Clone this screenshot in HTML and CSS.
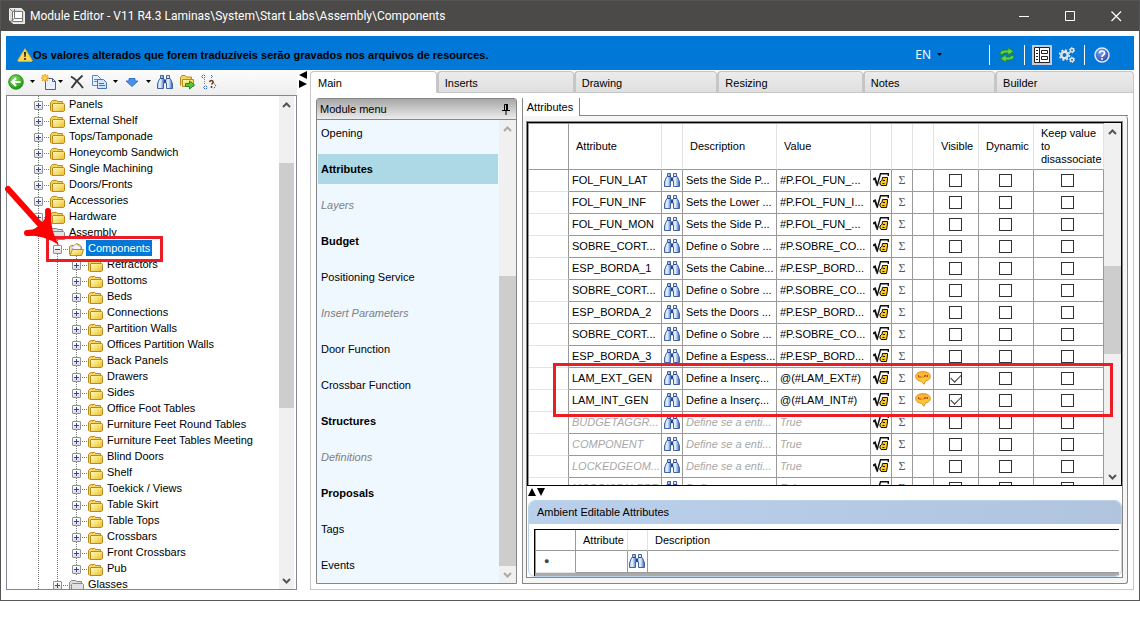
FILE: index.html
```html
<!DOCTYPE html>
<html lang="en">
<head>
<meta charset="utf-8">
<title>Module Editor</title>
<link rel="stylesheet" href="styles.css">
</head>
<body>
<svg class="defs" aria-hidden="true">
  <defs>
    <linearGradient id="gFolder" x1="0" y1="0" x2="1" y2="1"><stop offset="0" stop-color="#fffbd0"/><stop offset=".5" stop-color="#f8e06e"/><stop offset="1" stop-color="#e6b83a"/></linearGradient>
    <linearGradient id="gBino" x1="0" y1="0" x2="1" y2="0"><stop offset="0" stop-color="#8fb4e0"/><stop offset=".35" stop-color="#f2f8ff"/><stop offset=".65" stop-color="#9dbde6"/><stop offset="1" stop-color="#2f55a8"/></linearGradient>
    <radialGradient id="gGreen" cx=".4" cy=".3" r=".7"><stop offset="0" stop-color="#86e060"/><stop offset="1" stop-color="#1c9414"/></radialGradient>
    <radialGradient id="gHelp" cx=".4" cy=".3" r=".8"><stop offset="0" stop-color="#7fa4f0"/><stop offset="1" stop-color="#1b3fae"/></radialGradient>
    <linearGradient id="gTalk" x1="0" y1="0" x2="0" y2="1"><stop offset="0" stop-color="#ffb02a"/><stop offset="1" stop-color="#ffd83c"/></linearGradient>
    <symbol id="folder" viewBox="0 0 15 13"><path d="M.5 11.500V3.500L2.500 1.500H6.500L8 2.500H12.500V4.500" fill="#f3d565" stroke="#b98b1c"/><path d="M2.500 12.500V5Q2.500 4.500 3 4.500H13.500Q14.500 4.500 14.500 5.500V11.500L13.500 12.500Z" fill="url(#gFolder)" stroke="#b98b1c"/><path d="M.5 11.500L2.500 12.500" stroke="#b98b1c"/></symbol>
    <symbol id="folder-gray" viewBox="0 0 15 13"><path d="M.5 11.500V3.500L2.500 1.500H6.500L8 2.500H12.500V4.500" fill="#ddd" stroke="#888"/><path d="M2.500 12.500V5.500L3.500 4.500H13.500L14.500 5.500V12.500Z" fill="#e2e2e2" stroke="#888"/></symbol>
    <symbol id="folder-open" viewBox="0 0 15 13"><path d="M.5 11.500V3.500L2.500 2.500H5L8 .5L12.500 3.500V6" fill="#f1dc8a" stroke="#b98b1c"/><path d="M3 4L7 1L12 4.500L11 7H4Z" fill="#f4f4ff" stroke="#9a9ac8" stroke-dasharray="1 1"/><path d="M1 12.500L3.500 6.500H14.500L12.500 12.500Z" fill="url(#gFolder)" stroke="#b98b1c"/></symbol>
    <symbol id="bino" viewBox="0 0 16 14"><path d="M3.500 .5H6.500V3.500L7.500 5V8H6.500V13.500H.5V9L2 5L3.500 3Z" fill="url(#gBino)" stroke="#4263a6"/><path d="M9.500 .5H12.500V3L14 5L15.500 9V13.500H9.500V8H8.500V5L9.500 3.500Z" fill="url(#gBino)" stroke="#4263a6"/><path d="M3.500 3.500H6.500M9.500 3.500H12.500" stroke="#24448e"/><path d="M7 5H9V8H7Z" fill="#24448e"/></symbol>
    <symbol id="root" viewBox="0 0 16 14"><path d="M0 6.500L2 5.500L4 11.500" fill="none" stroke="#111" stroke-width="2"/><path d="M4 13L7.500 .8H15.300V3" fill="none" stroke="#111" stroke-width="1.400"/><path d="M9.500 4.500H14.500V7L13.500 12.500H8L7 11V9L8.500 7.500H9Z" fill="#ffc91c" stroke="#111"/><path d="M10 7.500H12M9.500 10.500H11.500" stroke="#111"/></symbol>
    <symbol id="talk" viewBox="0 0 16 14"><path d="M8 .7C12.500 .7 15.300 2.500 15.300 5.500C15.300 8 13 9.600 10.500 10L9 13.300L6.500 10.200C3 10 .7 8.300 .7 5.500C.7 2.500 3.500 .7 8 .7Z" fill="url(#gTalk)" stroke="#d98e2b"/><path d="M3.500 4V6H6.500M7.500 6H8.500M9.500 6V4.500H11V6M12.500 4V6" fill="none" stroke="#b5491c"/></symbol>
    <symbol id="up" viewBox="0 0 9 6"><path d="M1 5L4.500 1.500L8 5" fill="none" stroke="currentColor" stroke-width="2"/></symbol>
    <symbol id="down" viewBox="0 0 9 6"><path d="M1 1L4.500 4.500L8 1" fill="none" stroke="currentColor" stroke-width="2"/></symbol>
    <symbol id="caret" viewBox="0 0 5 3"><path d="M0 0H5L2.500 3Z" fill="#000"/></symbol>
  </defs>
</svg>

<div class="window">
  <header class="titlebar">
    <svg class="app-icon" viewBox="0 0 16 16"><path d="M.5 .5H12.500L15.500 4V15.500H4L.5 12Z" fill="#ddd" stroke="#eee"/><path d="M3.500 3.500H13.500V13.500H3.500Z" fill="#fff" stroke="#777"/><path d="M.5 .5L3.500 3.500M5.500 1V10.500L1 14M5.500 10.500H13" fill="none" stroke="#777"/></svg>
    <h1 class="title">Module Editor - V11 R4.3 Laminas\System\Start Labs\Assembly\Components</h1>
    <button class="win-btn" aria-label="Minimize"><svg viewBox="0 0 11 11"><path d="M0 5.500H10" stroke="#fff"/></svg></button>
    <button class="win-btn" aria-label="Maximize"><svg viewBox="0 0 11 11"><path d="M.5 .5H9.500V9.500H.5Z" fill="none" stroke="#fff"/></svg></button>
    <button class="win-btn" aria-label="Close"><svg viewBox="0 0 11 11"><path d="M.5 .5L10 10M10 .5L.5 10" stroke="#fff" stroke-width="1.200"/></svg></button>
  </header>

  <div class="client">
    <div class="banner">
      <svg class="warn" viewBox="0 0 16 14"><path d="M8 .7L15.300 12.500Q15 13.400 14 13.400H2Q1 13.400 .7 12.500Z" fill="#fbd84c" stroke="#d9b23c"/><path d="M7 4H9L8.600 9H7.400Z" fill="#222"/><circle cx="8" cy="11" r="1.100" fill="#222"/></svg>
      <strong class="banner-text">Os valores alterados que forem traduzíveis serão gravados nos arquivos de resources.</strong>
      <button class="lang">EN <svg class="caret"><use href="#caret"/></svg></button>
      <div class="tools">
        <button class="tool" aria-label="Refresh"><svg viewBox="0 0 16 16"><path d="M1 7Q1 3 6 3H9V.5L14.500 4.500L9 8.500V6H6Q3.500 6 3.500 8Z" fill="#5fd24a" stroke="#1d8a2a"/><path d="M15 9Q15 13 10 13H7V15.500L1.500 11.500L7 7.500V10H10Q12.500 10 12.500 8Z" fill="#5fd24a" stroke="#1d8a2a"/></svg></button>
      </div>
      <div class="tools">
        <button class="tool pressed" aria-label="Show properties"><svg viewBox="0 0 16 16"><path d="M.5 .5H15.500V15.500H.5Z" fill="#fff" stroke="#222"/><path d="M5.500 1V15M2 3.500H4M2 6.500H4M2 9.500H4M2 12.500H4" stroke="#222"/><path d="M7.500 3.500H13.500V6.500H7.500ZM7.500 9.500H13.500V12.500H7.500Z" fill="none" stroke="#222"/></svg></button>
        <button class="tool" aria-label="Settings"><svg viewBox="0 0 16 16"><circle cx="5.500" cy="8" r="3.200" fill="none" stroke="#e8e6e2" stroke-width="2.400"/><circle cx="5.500" cy="8" r="5" fill="none" stroke="#e8e6e2" stroke-width="1.600" stroke-dasharray="2 1.930"/><circle cx="13" cy="3.200" r="1.700" fill="none" stroke="#e8e6e2" stroke-width="1.500"/><circle cx="13" cy="3.200" r="2.700" fill="none" stroke="#e8e6e2" stroke-dasharray="1.400 1.430"/><circle cx="13" cy="12.800" r="1.700" fill="none" stroke="#e8e6e2" stroke-width="1.500"/><circle cx="13" cy="12.800" r="2.700" fill="none" stroke="#e8e6e2" stroke-dasharray="1.400 1.430"/></svg></button>
      </div>
      <div class="tools">
        <button class="tool" aria-label="Help"><svg viewBox="0 0 16 16"><circle cx="8" cy="8" r="7" fill="url(#gHelp)" stroke="#dfe8fa" stroke-width="1.500"/><path d="M5.500 6.300Q5.500 4 8 4T10.500 6.200Q10.500 7.300 9.300 8T8 10" fill="none" stroke="#fff" stroke-width="1.700"/><circle cx="8" cy="12" r="1" fill="#fff"/></svg></button>
      </div>
    </div>

    <div class="body">
      <aside class="side">
        <div class="toolbar">
          <div class="split">
            <button class="tb" aria-label="Back"><svg viewBox="0 0 16 16"><circle cx="8" cy="8" r="7.300" fill="url(#gGreen)" stroke="#2a9a20"/><path d="M12.500 8H4.500M8 4L4 8L8 12" fill="none" stroke="#fff" stroke-width="2.200"/></svg></button>
            <button class="drop" aria-label="Back options"><svg class="caret"><use href="#caret"/></svg></button>
          </div>
          <div class="split tight">
            <button class="tb" aria-label="New"><svg viewBox="0 0 16 16"><path d="M4.500 4.500H11.500L14.500 7.500V15.500H4.500Z" fill="#e8f0fb" stroke="#49618f"/><path d="M11.500 4.500V7.500H14.500" fill="none" stroke="#49618f"/><path d="M4 0V8M0 4H8M1 1L7 7M7 1L1 7" stroke="#f5a11c" stroke-width="1.500"/><circle cx="4" cy="4" r="1.800" fill="#ffe14a"/></svg></button>
            <button class="drop" aria-label="New options"><svg class="caret"><use href="#caret"/></svg></button>
          </div>
          <button class="tb" aria-label="Delete"><svg viewBox="0 0 16 16"><path d="M2 2.500Q8 6 14 14M13.500 1.500Q7 7 2.500 14" fill="none" stroke="#3a3a3a" stroke-width="1.900"/></svg></button>
          <div class="split">
            <button class="tb" aria-label="Copy"><svg viewBox="0 0 16 16"><path d="M1.500 1.500H6.500L9.500 4.500V11.500H1.500Z" fill="#e6f0ff" stroke="#5b86cc"/><path d="M3 5.500H7M3 7.500H7" stroke="#5b86cc"/><path d="M6.500 5.500H12.500L15.500 8.500V14.500H6.500Z" fill="#d2e4fc" stroke="#4672bd"/><path d="M8 9.500H13M8 11.500H14" stroke="#4672bd"/></svg></button>
            <button class="drop" aria-label="Copy options"><svg class="caret"><use href="#caret"/></svg></button>
          </div>
          <div class="split">
            <button class="tb" aria-label="Move down"><svg viewBox="0 0 16 16"><path d="M5 4.500H11V7H14L8 12.500L2 7H5Z" fill="#4d8fea" stroke="#3776d2"/></svg></button>
            <button class="drop" aria-label="Move options"><svg class="caret"><use href="#caret"/></svg></button>
          </div>
          <button class="tb" aria-label="Find"><svg viewBox="0 0 16 14"><use href="#bino"/></svg></button>
          <button class="tb" aria-label="Export to folder"><svg viewBox="0 0 16 16"><path d="M1.500 11.500V3.500L3 1.500H6L7.500 3H12.500V5" fill="#f3d565" stroke="#b98b1c"/><path d="M3.500 12.500V5.500H14.500V12.500Z" fill="url(#gFolder)" stroke="#b98b1c"/><path d="M6.500 9.500H10.500V7L15.500 11L10.500 15V12.500H6.500Z" fill="#5cc43c" stroke="#2a8a1c"/></svg></button>
          <button class="tb" aria-label="Check structure"><svg viewBox="0 0 16 16"><path d="M.5 2.500L2.500 .5L4.500 2.500L2.500 4.500ZM11.500 2.500L9.500 .5M11.500 2.500L9.500 4.500M2.500 13.500L4.500 11.500L6.500 13.500L4.500 15.500ZM12 8L15 12L12 15" fill="none" stroke="#2f62c4" stroke-dasharray="2 1"/><path d="M3.500 5V11" stroke="#38a0a0" stroke-dasharray="1 1"/><path d="M8.500 8Q9 6.500 10.500 6.500T12 8.500Q11.500 9.500 10.500 10.500M10.500 12V14" fill="none" stroke="#6b3a12" stroke-width="1.500"/></svg></button>
        </div>
        <nav class="tree" aria-label="Groups">
          <div class="tree-view">
            <ul class="branch">
              <li><div class="node"><i class="toggle plus"></i><svg class="fold"><use href="#folder"/></svg><span class="label">Panels</span></div></li>
              <li><div class="node"><i class="toggle plus"></i><svg class="fold"><use href="#folder"/></svg><span class="label">External Shelf</span></div></li>
              <li><div class="node"><i class="toggle plus"></i><svg class="fold"><use href="#folder"/></svg><span class="label">Tops/Tamponade</span></div></li>
              <li><div class="node"><i class="toggle plus"></i><svg class="fold"><use href="#folder"/></svg><span class="label">Honeycomb Sandwich</span></div></li>
              <li><div class="node"><i class="toggle plus"></i><svg class="fold"><use href="#folder"/></svg><span class="label">Single Machining</span></div></li>
              <li><div class="node"><i class="toggle plus"></i><svg class="fold"><use href="#folder"/></svg><span class="label">Doors/Fronts</span></div></li>
              <li><div class="node"><i class="toggle plus"></i><svg class="fold"><use href="#folder"/></svg><span class="label">Accessories</span></div></li>
              <li><div class="node"><i class="toggle plus"></i><svg class="fold"><use href="#folder"/></svg><span class="label">Hardware</span></div></li>
              <li><div class="node plain"><i class="toggle"></i><svg class="fold"><use href="#folder-gray"/></svg><span class="label">Assembly</span></div>
                <ul class="branch">
                  <li><div class="node current"><i class="toggle"></i><svg class="fold"><use href="#folder-open"/></svg><span class="label selected">Components</span>
                      <span class="mark mark-node"></span>
                      <svg class="pointer" viewBox="0 0 60 64"><path d="M6 6L42 46" stroke="#f00" stroke-width="6" stroke-linecap="round"/><path d="M25 50Q38 50 43 44Q47 38 46 28" fill="none" stroke="#f00" stroke-width="6" stroke-linecap="round"/><path d="M23 52Q42 52 57 62Q48 48 49 28L38 42Z" fill="#f00"/></svg></div>
                    <ul class="branch">
                      <li><div class="node"><i class="toggle plus"></i><svg class="fold"><use href="#folder"/></svg><span class="label">Retractors</span></div></li>
                      <li><div class="node"><i class="toggle plus"></i><svg class="fold"><use href="#folder"/></svg><span class="label">Bottoms</span></div></li>
                      <li><div class="node"><i class="toggle plus"></i><svg class="fold"><use href="#folder"/></svg><span class="label">Beds</span></div></li>
                      <li><div class="node"><i class="toggle plus"></i><svg class="fold"><use href="#folder"/></svg><span class="label">Connections</span></div></li>
                      <li><div class="node"><i class="toggle plus"></i><svg class="fold"><use href="#folder"/></svg><span class="label">Partition Walls</span></div></li>
                      <li><div class="node"><i class="toggle plus"></i><svg class="fold"><use href="#folder"/></svg><span class="label">Offices Partition Walls</span></div></li>
                      <li><div class="node"><i class="toggle plus"></i><svg class="fold"><use href="#folder"/></svg><span class="label">Back Panels</span></div></li>
                      <li><div class="node"><i class="toggle plus"></i><svg class="fold"><use href="#folder"/></svg><span class="label">Drawers</span></div></li>
                      <li><div class="node"><i class="toggle plus"></i><svg class="fold"><use href="#folder"/></svg><span class="label">Sides</span></div></li>
                      <li><div class="node"><i class="toggle plus"></i><svg class="fold"><use href="#folder"/></svg><span class="label">Office Foot Tables</span></div></li>
                      <li><div class="node"><i class="toggle plus"></i><svg class="fold"><use href="#folder"/></svg><span class="label">Furniture Feet Round Tables</span></div></li>
                      <li><div class="node"><i class="toggle plus"></i><svg class="fold"><use href="#folder"/></svg><span class="label">Furniture Feet Tables Meeting</span></div></li>
                      <li><div class="node"><i class="toggle plus"></i><svg class="fold"><use href="#folder"/></svg><span class="label">Blind Doors</span></div></li>
                      <li><div class="node"><i class="toggle plus"></i><svg class="fold"><use href="#folder"/></svg><span class="label">Shelf</span></div></li>
                      <li><div class="node"><i class="toggle plus"></i><svg class="fold"><use href="#folder"/></svg><span class="label">Toekick / Views</span></div></li>
                      <li><div class="node"><i class="toggle plus"></i><svg class="fold"><use href="#folder"/></svg><span class="label">Table Skirt</span></div></li>
                      <li><div class="node"><i class="toggle plus"></i><svg class="fold"><use href="#folder"/></svg><span class="label">Table Tops</span></div></li>
                      <li><div class="node"><i class="toggle plus"></i><svg class="fold"><use href="#folder"/></svg><span class="label">Crossbars</span></div></li>
                      <li><div class="node"><i class="toggle plus"></i><svg class="fold"><use href="#folder"/></svg><span class="label">Front Crossbars</span></div></li>
                      <li><div class="node"><i class="toggle plus"></i><svg class="fold"><use href="#folder"/></svg><span class="label">Pub</span></div></li>
                    </ul>
                  </li>
                  <li><div class="node"><i class="toggle plus"></i><svg class="fold"><use href="#folder-gray"/></svg><span class="label">Glasses</span></div></li>
                </ul>
              </li>
            </ul>
          </div>
          <div class="scroll tree-scroll">
            <button class="sb" aria-label="Scroll up"><svg><use href="#up"/></svg></button>
            <div class="track"><div class="space tree-before"></div><div class="thumb tree-thumb"></div><div class="space tree-after"></div></div>
            <button class="sb" aria-label="Scroll down"><svg><use href="#down"/></svg></button>
          </div>
        </nav>
      </aside>

      <div class="gutter">
        <svg viewBox="0 0 8 18"><path d="M8 0V8L0 4ZM0 9V17L8 13Z"/></svg>
      </div>

      <main class="main">
        <div class="tabs">
          <button class="tab active tab-main">Main</button>
          <button class="tab tab-inserts">Inserts</button>
          <button class="tab tab-drawing">Drawing</button>
          <button class="tab tab-resizing">Resizing</button>
          <button class="tab tab-notes">Notes</button>
          <button class="tab tab-builder">Builder</button>
        </div>
        <div class="page">
          <section class="menu">
            <div class="menu-head"><h2 class="menu-title">Module menu</h2>
              <button class="pin" aria-label="Pin"><svg viewBox="0 0 8 11"><path d="M2.500 6V.5H5.500V6M0 6.500H8M4 7V11" fill="none" stroke="#000"/><path d="M5 0V6" stroke="#000" stroke-width="2"/></svg></button></div>
            <div class="menu-body">
              <nav class="menu-list" aria-label="Module menu">
                <a class="item" href="#">Opening</a>
                <a class="item on" href="#">Attributes</a>
                <a class="item off" href="#">Layers</a>
                <a class="item strong" href="#">Budget</a>
                <a class="item" href="#">Positioning Service</a>
                <a class="item off" href="#">Insert Parameters</a>
                <a class="item" href="#">Door Function</a>
                <a class="item" href="#">Crossbar Function</a>
                <a class="item strong" href="#">Structures</a>
                <a class="item off" href="#">Definitions</a>
                <a class="item strong" href="#">Proposals</a>
                <a class="item" href="#">Tags</a>
                <a class="item" href="#">Events</a>
              </nav>
              <div class="scroll dim">
                <button class="sb" aria-label="Scroll up"><svg><use href="#up"/></svg></button>
                <div class="track"><div class="space menu-before"></div><div class="thumb menu-thumb"></div></div>
                <button class="sb" aria-label="Scroll down"><svg><use href="#down"/></svg></button>
              </div>
            </div>
          </section>

          <section class="attrs">
            <div class="subtabs"><button class="subtab">Attributes</button><div class="subline"></div></div>
            <div class="frame">
              <div class="frame-in">
                <div class="grid">
                  <div class="grid-view">
                    <table class="data">
                      <colgroup><col class="c40"><col class="c93"><col class="c21"><col class="c94"><col class="c94"><col class="c21"><col class="c21"><col class="c21"><col class="c45"><col class="c55"><col class="c70"></colgroup>
                      <thead><tr><th></th><th>Attribute</th><th></th><th>Description</th><th>Value</th><th></th><th></th><th></th><th>Visible</th><th>Dynamic</th><th>Keep value to disassociate</th></tr></thead>
                      <tbody>
                        <tr><th></th><td>FOL_FUN_LAT</td><td class="ico"><svg><use href="#bino"/></svg></td><td>Sets the Side P...</td><td>#P.FOL_FUN_...</td><td class="ico"><svg><use href="#root"/></svg></td><td class="sum">Σ</td><td></td><td class="chk"><input type="checkbox" aria-label="Visible"></td><td class="chk"><input type="checkbox" aria-label="Dynamic"></td><td class="chk"><input type="checkbox" aria-label="Keep value"></td></tr>
                        <tr><th></th><td>FOL_FUN_INF</td><td class="ico"><svg><use href="#bino"/></svg></td><td>Sets the Lower ...</td><td>#P.FOL_FUN_I...</td><td class="ico"><svg><use href="#root"/></svg></td><td class="sum">Σ</td><td></td><td class="chk"><input type="checkbox" aria-label="Visible"></td><td class="chk"><input type="checkbox" aria-label="Dynamic"></td><td class="chk"><input type="checkbox" aria-label="Keep value"></td></tr>
                        <tr><th></th><td>FOL_FUN_MON</td><td class="ico"><svg><use href="#bino"/></svg></td><td>Sets the Side P...</td><td>#P.FOL_FUN_...</td><td class="ico"><svg><use href="#root"/></svg></td><td class="sum">Σ</td><td></td><td class="chk"><input type="checkbox" aria-label="Visible"></td><td class="chk"><input type="checkbox" aria-label="Dynamic"></td><td class="chk"><input type="checkbox" aria-label="Keep value"></td></tr>
                        <tr><th></th><td>SOBRE_CORT...</td><td class="ico"><svg><use href="#bino"/></svg></td><td>Define o Sobre ...</td><td>#P.SOBRE_CO...</td><td class="ico"><svg><use href="#root"/></svg></td><td class="sum">Σ</td><td></td><td class="chk"><input type="checkbox" aria-label="Visible"></td><td class="chk"><input type="checkbox" aria-label="Dynamic"></td><td class="chk"><input type="checkbox" aria-label="Keep value"></td></tr>
                        <tr><th></th><td>ESP_BORDA_1</td><td class="ico"><svg><use href="#bino"/></svg></td><td>Sets the Cabine...</td><td>#P.ESP_BORD...</td><td class="ico"><svg><use href="#root"/></svg></td><td class="sum">Σ</td><td></td><td class="chk"><input type="checkbox" aria-label="Visible"></td><td class="chk"><input type="checkbox" aria-label="Dynamic"></td><td class="chk"><input type="checkbox" aria-label="Keep value"></td></tr>
                        <tr><th></th><td>SOBRE_CORT...</td><td class="ico"><svg><use href="#bino"/></svg></td><td>Define o Sobre ...</td><td>#P.SOBRE_CO...</td><td class="ico"><svg><use href="#root"/></svg></td><td class="sum">Σ</td><td></td><td class="chk"><input type="checkbox" aria-label="Visible"></td><td class="chk"><input type="checkbox" aria-label="Dynamic"></td><td class="chk"><input type="checkbox" aria-label="Keep value"></td></tr>
                        <tr><th></th><td>ESP_BORDA_2</td><td class="ico"><svg><use href="#bino"/></svg></td><td>Sets the Doors ...</td><td>#P.ESP_BORD...</td><td class="ico"><svg><use href="#root"/></svg></td><td class="sum">Σ</td><td></td><td class="chk"><input type="checkbox" aria-label="Visible"></td><td class="chk"><input type="checkbox" aria-label="Dynamic"></td><td class="chk"><input type="checkbox" aria-label="Keep value"></td></tr>
                        <tr><th></th><td>SOBRE_CORT...</td><td class="ico"><svg><use href="#bino"/></svg></td><td>Define o Sobre ...</td><td>#P.SOBRE_CO...</td><td class="ico"><svg><use href="#root"/></svg></td><td class="sum">Σ</td><td></td><td class="chk"><input type="checkbox" aria-label="Visible"></td><td class="chk"><input type="checkbox" aria-label="Dynamic"></td><td class="chk"><input type="checkbox" aria-label="Keep value"></td></tr>
                        <tr><th></th><td>ESP_BORDA_3</td><td class="ico"><svg><use href="#bino"/></svg></td><td>Define a Espess...</td><td>#P.ESP_BORD...</td><td class="ico"><svg><use href="#root"/></svg></td><td class="sum">Σ</td><td></td><td class="chk"><input type="checkbox" aria-label="Visible"></td><td class="chk"><input type="checkbox" aria-label="Dynamic"></td><td class="chk"><input type="checkbox" aria-label="Keep value"></td></tr>
                        <tr><th></th><td>LAM_EXT_GEN</td><td class="ico"><svg><use href="#bino"/></svg></td><td>Define a Inserç...</td><td>@(#LAM_EXT#)</td><td class="ico"><svg><use href="#root"/></svg></td><td class="sum">Σ</td><td class="ico"><svg><use href="#talk"/></svg></td><td class="chk"><input type="checkbox" checked aria-label="Visible"></td><td class="chk"><input type="checkbox" aria-label="Dynamic"></td><td class="chk"><input type="checkbox" aria-label="Keep value"></td></tr>
                        <tr><th></th><td>LAM_INT_GEN</td><td class="ico"><svg><use href="#bino"/></svg></td><td>Define a Inserç...</td><td>@(#LAM_INT#)</td><td class="ico"><svg><use href="#root"/></svg></td><td class="sum">Σ</td><td class="ico"><svg><use href="#talk"/></svg></td><td class="chk"><input type="checkbox" checked aria-label="Visible"></td><td class="chk"><input type="checkbox" aria-label="Dynamic"></td><td class="chk"><input type="checkbox" aria-label="Keep value"></td></tr>
                        <tr class="locked"><th></th><td>BUDGETAGGR...</td><td class="ico"><svg><use href="#bino"/></svg></td><td>Define se a enti...</td><td>True</td><td class="ico"><svg><use href="#root"/></svg></td><td class="sum">Σ</td><td></td><td class="chk"><input type="checkbox" aria-label="Visible"></td><td class="chk"><input type="checkbox" aria-label="Dynamic"></td><td class="chk"><input type="checkbox" aria-label="Keep value"></td></tr>
                        <tr class="locked"><th></th><td>COMPONENT</td><td class="ico"><svg><use href="#bino"/></svg></td><td>Define se a enti...</td><td>True</td><td class="ico"><svg><use href="#root"/></svg></td><td class="sum">Σ</td><td></td><td class="chk"><input type="checkbox" aria-label="Visible"></td><td class="chk"><input type="checkbox" aria-label="Dynamic"></td><td class="chk"><input type="checkbox" aria-label="Keep value"></td></tr>
                        <tr class="locked"><th></th><td>LOCKEDGEOM...</td><td class="ico"><svg><use href="#bino"/></svg></td><td>Define se a enti...</td><td>True</td><td class="ico"><svg><use href="#root"/></svg></td><td class="sum">Σ</td><td></td><td class="chk"><input type="checkbox" aria-label="Visible"></td><td class="chk"><input type="checkbox" aria-label="Dynamic"></td><td class="chk"><input type="checkbox" aria-label="Keep value"></td></tr>
                        <tr class="locked"><th></th><td>MODDISPALERT</td><td class="ico"><svg><use href="#bino"/></svg></td><td>Define a mens...</td><td>False</td><td class="ico"><svg><use href="#root"/></svg></td><td class="sum">Σ</td><td></td><td class="chk"><input type="checkbox" aria-label="Visible"></td><td class="chk"><input type="checkbox" aria-label="Dynamic"></td><td class="chk"><input type="checkbox" aria-label="Keep value"></td></tr>
                      </tbody>
                    </table>
                  </div>
                  <div class="scroll">
                    <button class="sb" aria-label="Scroll up"><svg><use href="#up"/></svg></button>
                    <div class="track"><div class="space grid-before"></div><div class="thumb grid-thumb"></div><div class="space grid-after"></div></div>
                    <button class="sb" aria-label="Scroll down"><svg><use href="#down"/></svg></button>
                  </div>
                  <span class="mark mark-rows"></span>
                </div>
                <div class="sizer"><svg viewBox="0 0 18 8"><path d="M0 8L4 0L8 8ZM9 0H17L13 8Z"/></svg></div>
                <section class="ambient">
                  <h2 class="ambient-title">Ambient Editable Attributes</h2>
                  <div class="ambient-grid">
                    <table class="data small">
                      <colgroup><col class="c40"><col class="c52"><col class="c20"><col></colgroup>
                      <thead><tr><th></th><th>Attribute</th><th></th><th>Description</th></tr></thead>
                      <tbody><tr><th class="new-row">●</th><td></td><td class="ico"><svg><use href="#bino"/></svg></td><td></td></tr></tbody>
                    </table>
                  </div>
                </section>
              </div>
            </div>
          </section>
        </div>
      </main>
    </div>
  </div>
</div>
</body>
</html>
```
FILE: styles.css
```css
* { box-sizing: border-box; }

body {
  margin: 0;
  background: #fff;
  color: #000;
  font: 11px/16px "Liberation Sans", Arial, sans-serif;
}

button {
  margin: 0;
  padding: 0;
  border: 0;
  background: none;
  color: inherit;
  font: inherit;
}

h1, h2 { margin: 0; font: inherit; }
svg { display: block; flex: none; }
.defs { position: absolute; width: 0; height: 0; }

.window {
  display: flex;
  flex-direction: column;
  height: calc(100vh - 31px);
  border: 1px solid #555;
}

/* Title bar */
.titlebar {
  display: flex;
  align-items: center;
  height: 30px;
  flex: none;
  padding-left: 8px;
  background: #4b4a48;
  color: #fff;
}
.app-icon { width: 16px; height: 16px; }
.title {
  flex: 1;
  padding-left: 5px;
  font: 12px/16px Roboto, "Open Sans", sans-serif;
}
.win-btn { display: grid; place-items: center; width: 46px; height: 30px; }
.win-btn svg { width: 11px; height: 11px; }

.client {
  display: flex;
  flex-direction: column;
  flex: 1;
  min-height: 0;
  padding: 5px 5px 10px;
}

/* Message banner */
.banner {
  display: flex;
  align-items: center;
  flex: none;
  height: 34px;
  padding: 3px 15px 0 11px;
  background: #0078d7;
}
.warn { width: 16px; height: 14px; }
.banner-text { flex: 1; }
.lang {
  display: flex;
  align-items: center;
  gap: 6px;
  margin-right: 47px;
  color: #fff;
  font: 12px/16px "Open Sans", "Noto Sans", sans-serif;
}
.caret { width: 5px; height: 3px; }
.tools {
  display: flex;
  align-items: center;
  gap: 5px;
  height: 20px;
  padding: 0 7px;
  border-left: 1px solid #fff;
}
.tool { display: grid; place-items: center; width: 20px; height: 20px; }
.tool svg { width: 16px; height: 16px; }
.pressed { background: #c5cbd8; }

.body { display: flex; flex: 1; min-height: 0; }

/* Left column */
.side { display: flex; flex-direction: column; width: 291px; flex: none; }
.toolbar {
  display: flex;
  align-items: center;
  gap: 6px;
  height: 25px;
  flex: none;
  padding: 0 2px 2px;
  border-radius: 0 3px 3px 0;
  background: linear-gradient(#fdfdfd, #ededed);
}
.split { display: flex; align-items: center; gap: 6px; }
.tight { gap: 1px; }
.tb svg { width: 16px; height: 16px; }
.drop { height: 16px; }

.tree {
  display: flex;
  flex: 1;
  min-height: 0;
  border: 1px solid #828790;
}
.tree-view {
  position: relative;
  flex: 1;
  min-width: 0;
  overflow: hidden;
  margin-left: -3px;
  padding-left: 30px;
}
.branch {
  margin: 0;
  padding: 0;
  list-style: none;
  background: repeating-linear-gradient(#777 0 1px, transparent 1px 2px) 4px 0 / 1px 100% no-repeat;
}
.branch .branch { margin-left: 19px; }
.node {
  display: flex;
  height: 16px;
  align-items: flex-start;
  background: repeating-linear-gradient(90deg, #777 0 1px, transparent 1px 2px) 10px 9px / 6px 1px no-repeat;
}
.toggle {
  width: 9px;
  height: 9px;
  flex: none;
  margin: 5px 7px 0 0;
  border: 1px solid #919191;
  border-radius: 1px;
  background:
    linear-gradient(#2c4a9c, #2c4a9c) center / 5px 1px no-repeat,
    linear-gradient(#fff, #ddd);
}
.plus {
  background:
    linear-gradient(#2c4a9c, #2c4a9c) center / 5px 1px no-repeat,
    linear-gradient(#2c4a9c, #2c4a9c) center / 1px 5px no-repeat,
    linear-gradient(#fff, #ddd);
}
.plain { background: none; }
.plain .toggle { visibility: hidden; }
.fold { width: 15px; height: 13px; margin-top: 3px; }
.label { padding: 0 2px; margin-left: 2px; line-height: 16px; }
.selected { background: #0078d7; color: #fff; }
.current { position: relative; }

.mark { position: absolute; border: 3px solid #ed1c24; pointer-events: none; }
.mark-node { left: -7px; top: -4px; width: 117px; height: 26px; }
.mark-rows { left: 25px; right: 8px; top: 240px; height: 54px; }
.pointer { position: absolute; left: -51px; top: -57px; width: 60px; height: 64px; }

/* Scroll bars */
.scroll {
  display: flex;
  flex-direction: column;
  width: 17px;
  flex: none;
  background: #f0f0f0;
  color: #555;
}
.tree-scroll { width: 15px; margin-right: 2px; }
.dim { color: #aaa; }
.sb { display: grid; place-items: center; height: 17px; width: 100%; }
.sb svg { width: 9px; height: 6px; }
.track { display: flex; flex-direction: column; flex: 1; }
.thumb { background: #cdcdcd; }
.tree-before { flex: 50; }
.tree-thumb { flex: 245; }
.tree-after { flex: 164; }
.menu-before { flex: 139; }
.menu-thumb { flex: 290; }
.grid-before { flex: 126; }
.grid-thumb { flex: 87; }
.grid-after { flex: 114; }

.gutter { width: 13px; flex: none; padding: 1px 2px 0; }
.gutter svg { width: 8px; height: 18px; }

/* Main tabs */
.main { display: flex; flex-direction: column; flex: 1; min-width: 0; }
.tabs { display: flex; height: 22px; flex: none; margin-top: 1px; }
.tab {
  min-width: 0;
  padding: 2px 0 0 6px;
  border: 1px solid #c6c6c6;
  border-left-width: 2px;
  border-radius: 4px 4px 0 0;
  background: linear-gradient(#ececec, #dfdfdf);
  text-align: left;
}
.active { padding-left: 7px; border-left-width: 1px; border-bottom-color: #fff; background: #fff; }
.tab-main { flex: 126; }
.tab-inserts { flex: 137; }
.tab-drawing { flex: 144; }
.tab-resizing { flex: 146; }
.tab-notes { flex: 132; }
.tab-builder { flex: 139; }

.page {
  display: flex;
  gap: 5px;
  flex: 1;
  min-height: 0;
  padding: 5px;
  border: 1px solid #c6c6c6;
  border-top: 0;
}

/* Module menu */
.menu {
  display: flex;
  flex-direction: column;
  width: 201px;
  flex: none;
  border: 1px solid #868686;
  border-radius: 3px 3px 0 0;
}
.menu-head {
  display: flex;
  align-items: center;
  justify-content: space-between;
  height: 21px;
  flex: none;
  padding: 0 6px 0 3px;
  border-bottom: 1px solid #868686;
  background: linear-gradient(#a6a6a6, #ececec);
}
.pin svg { width: 8px; height: 11px; }
.menu-body { display: flex; flex: 1; min-height: 0; background: #eff7ff; }
.menu-list {
  display: flex;
  flex-direction: column;
  gap: 6px;
  flex: 1;
  padding: 0 1px;
  overflow: hidden;
}
.item {
  flex: none;
  height: 30px;
  padding-left: 3px;
  line-height: 30px;
  color: #000;
  text-decoration: none;
}
.item:first-child { height: 28px; line-height: 26px; }
.on { background: #add8e6; font-weight: bold; }
.strong { font-weight: bold; }
.off { color: #808080; font-style: italic; }

/* Attribute editor */
.attrs { display: flex; flex-direction: column; flex: 1; min-width: 0; }
.subtabs { display: flex; height: 18px; flex: none; }
.subtab {
  width: 58px;
  padding-right: 2px;
  border: 1px solid #868686;
  border-width: 0 1px;
  text-align: center;
}
.subline { flex: 1; border-bottom: 1px solid #868686; }
.frame {
  flex: 1;
  min-height: 0;
  padding: 5px 4px 5px 3px;
  border: 1px solid #868686;
  border-top: 0;
  border-radius: 0 3px 3px 0;
  background: #f6f6f6;
}
.frame-in {
  display: flex;
  flex-direction: column;
  height: 100%;
  border: 1px solid #868686;
  background: #fff;
}
.grid {
  position: relative;
  display: flex;
  flex: 1;
  min-height: 0;
  border: 1px solid #000;
}
.grid-view {
  flex: 1;
  min-width: 0;
  overflow: hidden;
  border: 1px solid #999;
  border-width: 1px 0 0 1px;
}

.data {
  width: 100%;
  table-layout: fixed;
  border-collapse: separate;
  border-spacing: 0;
}
.c20 { width: 20px; }
.c21 { width: 21px; }
.c40 { width: 40px; }
.c45 { width: 45px; }
.c52 { width: 52px; }
.c55 { width: 55px; }
.c70 { width: 70px; }
.c93 { width: 93px; }
.c94 { width: 94px; }
.data th, .data td {
  height: 22px;
  padding: 0 0 0 3px;
  overflow: hidden;
  border: 0 solid #999;
  border-width: 0 1px 1px 0;
  font-weight: normal;
  text-align: left;
  white-space: nowrap;
  line-height: 13px;
}
.data thead th {
  height: 46px;
  padding-left: 7px;
  border-right-color: #e3e3e3;
  white-space: normal;
}
.data thead th:first-child { border-right-color: #999; }
.data tbody th { border-bottom-color: #e3e3e3; }
.data .ico { padding: 0 0 2px 2px; }
.ico svg { width: 16px; height: 14px; }
.data .sum {
  padding: 0;
  color: #555;
  font-family: "Liberation Serif", serif;
  font-size: 12px;
  text-align: center;
}
.data .chk { padding: 0 2px 0 0; text-align: center; }
.chk input {
  appearance: none;
  display: block;
  width: 13px;
  height: 13px;
  margin: 0 auto;
  border: 1px solid #333;
  background: #fff;
}
.chk input:checked::before {
  content: "";
  display: block;
  width: 9px;
  height: 5px;
  margin: 1px;
  border: solid #333;
  border-width: 0 0 1px 1px;
  transform: rotate(-45deg);
}
.locked td { color: #a8a8a8; font-style: italic; }
.locked .sum { font-style: normal; }

.sizer { height: 14px; flex: none; padding: 2px 1px; }
.sizer svg { width: 18px; height: 8px; }

/* Ambient attributes */
.ambient {
  flex: none;
  margin-left: 1px;
  border: 1px solid #bcd3ea;
  border-radius: 7px;
  overflow: hidden;
}
.ambient-title {
  height: 23px;
  padding-left: 8px;
  background: linear-gradient(90deg, #b9d0ec, #b0c4de);
  line-height: 22px;
}
.ambient-grid {
  margin: 5px 2px 0 5px;
  padding-bottom: 3px;
  border: 1px solid #000;
  border-width: 1px 0 0 1px;
  background: #aaa;
}
.small { background: #fff; border-left: 1px solid #999; }
.data.small thead th { height: 21px; }
.data.small tr > :last-child { border-right: 0; }
.data.small .ico { padding-left: 1px; }
.data.small .new-row { padding-left: 8px; color: #444; font-size: 9px; }
```
